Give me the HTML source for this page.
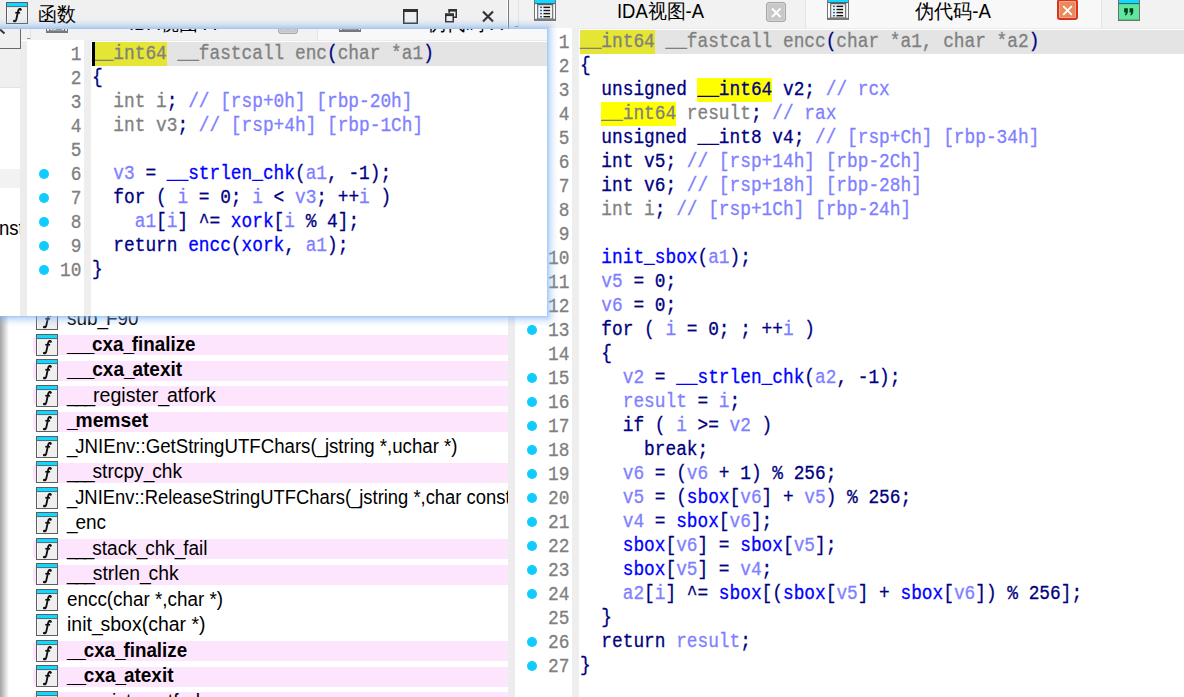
<!DOCTYPE html>
<html><head><meta charset="utf-8"><style>
html,body{margin:0;padding:0;}
body{width:1184px;height:697px;overflow:hidden;position:relative;background:#fff;font-family:"Liberation Sans",sans-serif;}
div{position:absolute;}
.code{font-family:"Liberation Mono",monospace;font-size:19.5px;line-height:24px;white-space:pre;height:24px;transform:scaleX(0.9128);transform-origin:0 0;-webkit-text-stroke:0.3px currentColor;}
.ln{margin-top:1px;font-family:"Liberation Mono",monospace;font-size:19.5px;line-height:24px;text-align:right;color:#808080;height:24px;letter-spacing:-1.02px;-webkit-text-stroke:0.25px currentColor;}
.dot{width:10px;height:10px;border-radius:50%;background:#11ccff;}
.hl{height:24px;}
.pink{left:33px;width:475px;height:20px;background:#fde6fd;border-radius:5px 0 0 5px;}
.ficon{left:36px;width:22px;height:22px;}
svg{display:block}
.fname{left:67px;margin-top:-1px;font-size:19.5px;line-height:22px;white-space:pre;color:#000;transform-origin:0 0;}
.u{letter-spacing:-2.2px}
.tab{font-size:19.5px;line-height:22px;white-space:pre;color:#000;transform-origin:0 0;}
</style></head><body>
<!-- left functions panel -->
<div id="fl" style="left:0;top:0;width:508px;height:697px;overflow:hidden;background:#fff">
<div class="ficon" style="top:308px"><svg width="22" height="22" viewBox="0 0 22 22"><rect x="0.5" y="0.5" width="21" height="21" fill="#efefef" stroke="#5e5e5e"/><rect x="1" y="1" width="20" height="3.4" fill="#12d8ff"/><rect x="1" y="4.3" width="20" height="1" fill="#1e4a55"/><rect x="1" y="5.3" width="20" height="1" fill="#fafafa"/><rect x="1" y="5.3" width="1" height="15.7" fill="#fafafa"/><path d="M14.8 7.6 C14.2 6.4 12.8 6.6 12.3 8.4 L10.3 17.4 C10.0 18.9 9.3 19.6 8.0 19.3" fill="none" stroke="#111" stroke-width="1.9" stroke-linecap="round"/><circle cx="14.3" cy="7.5" r="1.15" fill="#111"/><circle cx="8.3" cy="18.9" r="1.15" fill="#111"/><rect x="9.3" y="9.9" width="4.8" height="1.7" fill="#111"/></svg></div>
<div class="fname" style="top:308px;font-weight:normal;transform:scaleX(0.9700)">sub<span class="u">_</span>F90</div>
<div class="pink" style="top:335px"></div>
<div class="ficon" style="top:334px"><svg width="22" height="22" viewBox="0 0 22 22"><rect x="0.5" y="0.5" width="21" height="21" fill="#efefef" stroke="#5e5e5e"/><rect x="1" y="1" width="20" height="3.4" fill="#12d8ff"/><rect x="1" y="4.3" width="20" height="1" fill="#1e4a55"/><rect x="1" y="5.3" width="20" height="1" fill="#fafafa"/><rect x="1" y="5.3" width="1" height="15.7" fill="#fafafa"/><path d="M14.8 7.6 C14.2 6.4 12.8 6.6 12.3 8.4 L10.3 17.4 C10.0 18.9 9.3 19.6 8.0 19.3" fill="none" stroke="#111" stroke-width="1.9" stroke-linecap="round"/><circle cx="14.3" cy="7.5" r="1.15" fill="#111"/><circle cx="8.3" cy="18.9" r="1.15" fill="#111"/><rect x="9.3" y="9.9" width="4.8" height="1.7" fill="#111"/></svg></div>
<div class="fname" style="top:334px;font-weight:bold;transform:scaleX(0.9644)"><span class="u">___</span>cxa<span class="u">_</span>finalize</div>
<div class="pink" style="top:361px"></div>
<div class="ficon" style="top:359px"><svg width="22" height="22" viewBox="0 0 22 22"><rect x="0.5" y="0.5" width="21" height="21" fill="#efefef" stroke="#5e5e5e"/><rect x="1" y="1" width="20" height="3.4" fill="#12d8ff"/><rect x="1" y="4.3" width="20" height="1" fill="#1e4a55"/><rect x="1" y="5.3" width="20" height="1" fill="#fafafa"/><rect x="1" y="5.3" width="1" height="15.7" fill="#fafafa"/><path d="M14.8 7.6 C14.2 6.4 12.8 6.6 12.3 8.4 L10.3 17.4 C10.0 18.9 9.3 19.6 8.0 19.3" fill="none" stroke="#111" stroke-width="1.9" stroke-linecap="round"/><circle cx="14.3" cy="7.5" r="1.15" fill="#111"/><circle cx="8.3" cy="18.9" r="1.15" fill="#111"/><rect x="9.3" y="9.9" width="4.8" height="1.7" fill="#111"/></svg></div>
<div class="fname" style="top:359px;font-weight:bold;transform:scaleX(0.9746)"><span class="u">___</span>cxa<span class="u">_</span>atexit</div>
<div class="pink" style="top:386px"></div>
<div class="ficon" style="top:385px"><svg width="22" height="22" viewBox="0 0 22 22"><rect x="0.5" y="0.5" width="21" height="21" fill="#efefef" stroke="#5e5e5e"/><rect x="1" y="1" width="20" height="3.4" fill="#12d8ff"/><rect x="1" y="4.3" width="20" height="1" fill="#1e4a55"/><rect x="1" y="5.3" width="20" height="1" fill="#fafafa"/><rect x="1" y="5.3" width="1" height="15.7" fill="#fafafa"/><path d="M14.8 7.6 C14.2 6.4 12.8 6.6 12.3 8.4 L10.3 17.4 C10.0 18.9 9.3 19.6 8.0 19.3" fill="none" stroke="#111" stroke-width="1.9" stroke-linecap="round"/><circle cx="14.3" cy="7.5" r="1.15" fill="#111"/><circle cx="8.3" cy="18.9" r="1.15" fill="#111"/><rect x="9.3" y="9.9" width="4.8" height="1.7" fill="#111"/></svg></div>
<div class="fname" style="top:385px;font-weight:normal;transform:scaleX(1.0033)"><span class="u">___</span>register<span class="u">_</span>atfork</div>
<div class="pink" style="top:412px"></div>
<div class="ficon" style="top:410px"><svg width="22" height="22" viewBox="0 0 22 22"><rect x="0.5" y="0.5" width="21" height="21" fill="#efefef" stroke="#5e5e5e"/><rect x="1" y="1" width="20" height="3.4" fill="#12d8ff"/><rect x="1" y="4.3" width="20" height="1" fill="#1e4a55"/><rect x="1" y="5.3" width="20" height="1" fill="#fafafa"/><rect x="1" y="5.3" width="1" height="15.7" fill="#fafafa"/><path d="M14.8 7.6 C14.2 6.4 12.8 6.6 12.3 8.4 L10.3 17.4 C10.0 18.9 9.3 19.6 8.0 19.3" fill="none" stroke="#111" stroke-width="1.9" stroke-linecap="round"/><circle cx="14.3" cy="7.5" r="1.15" fill="#111"/><circle cx="8.3" cy="18.9" r="1.15" fill="#111"/><rect x="9.3" y="9.9" width="4.8" height="1.7" fill="#111"/></svg></div>
<div class="fname" style="top:410px;font-weight:bold;transform:scaleX(0.9869)"><span class="u">_</span>memset</div>
<div class="ficon" style="top:436px"><svg width="22" height="22" viewBox="0 0 22 22"><rect x="0.5" y="0.5" width="21" height="21" fill="#efefef" stroke="#5e5e5e"/><rect x="1" y="1" width="20" height="3.4" fill="#12d8ff"/><rect x="1" y="4.3" width="20" height="1" fill="#1e4a55"/><rect x="1" y="5.3" width="20" height="1" fill="#fafafa"/><rect x="1" y="5.3" width="1" height="15.7" fill="#fafafa"/><path d="M14.8 7.6 C14.2 6.4 12.8 6.6 12.3 8.4 L10.3 17.4 C10.0 18.9 9.3 19.6 8.0 19.3" fill="none" stroke="#111" stroke-width="1.9" stroke-linecap="round"/><circle cx="14.3" cy="7.5" r="1.15" fill="#111"/><circle cx="8.3" cy="18.9" r="1.15" fill="#111"/><rect x="9.3" y="9.9" width="4.8" height="1.7" fill="#111"/></svg></div>
<div class="fname" style="top:436px;font-weight:normal;transform:scaleX(0.9559)"><span class="u">_</span>JNIEnv::GetStringUTFChars(<span class="u">_</span>jstring *,uchar *)</div>
<div class="pink" style="top:463px"></div>
<div class="ficon" style="top:461px"><svg width="22" height="22" viewBox="0 0 22 22"><rect x="0.5" y="0.5" width="21" height="21" fill="#efefef" stroke="#5e5e5e"/><rect x="1" y="1" width="20" height="3.4" fill="#12d8ff"/><rect x="1" y="4.3" width="20" height="1" fill="#1e4a55"/><rect x="1" y="5.3" width="20" height="1" fill="#fafafa"/><rect x="1" y="5.3" width="1" height="15.7" fill="#fafafa"/><path d="M14.8 7.6 C14.2 6.4 12.8 6.6 12.3 8.4 L10.3 17.4 C10.0 18.9 9.3 19.6 8.0 19.3" fill="none" stroke="#111" stroke-width="1.9" stroke-linecap="round"/><circle cx="14.3" cy="7.5" r="1.15" fill="#111"/><circle cx="8.3" cy="18.9" r="1.15" fill="#111"/><rect x="9.3" y="9.9" width="4.8" height="1.7" fill="#111"/></svg></div>
<div class="fname" style="top:461px;font-weight:normal;transform:scaleX(0.9840)"><span class="u">___</span>strcpy<span class="u">_</span>chk</div>
<div class="ficon" style="top:487px"><svg width="22" height="22" viewBox="0 0 22 22"><rect x="0.5" y="0.5" width="21" height="21" fill="#efefef" stroke="#5e5e5e"/><rect x="1" y="1" width="20" height="3.4" fill="#12d8ff"/><rect x="1" y="4.3" width="20" height="1" fill="#1e4a55"/><rect x="1" y="5.3" width="20" height="1" fill="#fafafa"/><rect x="1" y="5.3" width="1" height="15.7" fill="#fafafa"/><path d="M14.8 7.6 C14.2 6.4 12.8 6.6 12.3 8.4 L10.3 17.4 C10.0 18.9 9.3 19.6 8.0 19.3" fill="none" stroke="#111" stroke-width="1.9" stroke-linecap="round"/><circle cx="14.3" cy="7.5" r="1.15" fill="#111"/><circle cx="8.3" cy="18.9" r="1.15" fill="#111"/><rect x="9.3" y="9.9" width="4.8" height="1.7" fill="#111"/></svg></div>
<div class="fname" style="top:487px;font-weight:normal;transform:scaleX(0.9430)"><span class="u">_</span>JNIEnv::ReleaseStringUTFChars(<span class="u">_</span>jstring *,char const*)</div>
<div class="ficon" style="top:512px"><svg width="22" height="22" viewBox="0 0 22 22"><rect x="0.5" y="0.5" width="21" height="21" fill="#efefef" stroke="#5e5e5e"/><rect x="1" y="1" width="20" height="3.4" fill="#12d8ff"/><rect x="1" y="4.3" width="20" height="1" fill="#1e4a55"/><rect x="1" y="5.3" width="20" height="1" fill="#fafafa"/><rect x="1" y="5.3" width="1" height="15.7" fill="#fafafa"/><path d="M14.8 7.6 C14.2 6.4 12.8 6.6 12.3 8.4 L10.3 17.4 C10.0 18.9 9.3 19.6 8.0 19.3" fill="none" stroke="#111" stroke-width="1.9" stroke-linecap="round"/><circle cx="14.3" cy="7.5" r="1.15" fill="#111"/><circle cx="8.3" cy="18.9" r="1.15" fill="#111"/><rect x="9.3" y="9.9" width="4.8" height="1.7" fill="#111"/></svg></div>
<div class="fname" style="top:512px;font-weight:normal;transform:scaleX(0.9748)"><span class="u">_</span>enc</div>
<div class="pink" style="top:539px"></div>
<div class="ficon" style="top:538px"><svg width="22" height="22" viewBox="0 0 22 22"><rect x="0.5" y="0.5" width="21" height="21" fill="#efefef" stroke="#5e5e5e"/><rect x="1" y="1" width="20" height="3.4" fill="#12d8ff"/><rect x="1" y="4.3" width="20" height="1" fill="#1e4a55"/><rect x="1" y="5.3" width="20" height="1" fill="#fafafa"/><rect x="1" y="5.3" width="1" height="15.7" fill="#fafafa"/><path d="M14.8 7.6 C14.2 6.4 12.8 6.6 12.3 8.4 L10.3 17.4 C10.0 18.9 9.3 19.6 8.0 19.3" fill="none" stroke="#111" stroke-width="1.9" stroke-linecap="round"/><circle cx="14.3" cy="7.5" r="1.15" fill="#111"/><circle cx="8.3" cy="18.9" r="1.15" fill="#111"/><rect x="9.3" y="9.9" width="4.8" height="1.7" fill="#111"/></svg></div>
<div class="fname" style="top:538px;font-weight:normal;transform:scaleX(0.9753)"><span class="u">___</span>stack<span class="u">_</span>chk<span class="u">_</span>fail</div>
<div class="pink" style="top:565px"></div>
<div class="ficon" style="top:563px"><svg width="22" height="22" viewBox="0 0 22 22"><rect x="0.5" y="0.5" width="21" height="21" fill="#efefef" stroke="#5e5e5e"/><rect x="1" y="1" width="20" height="3.4" fill="#12d8ff"/><rect x="1" y="4.3" width="20" height="1" fill="#1e4a55"/><rect x="1" y="5.3" width="20" height="1" fill="#fafafa"/><rect x="1" y="5.3" width="1" height="15.7" fill="#fafafa"/><path d="M14.8 7.6 C14.2 6.4 12.8 6.6 12.3 8.4 L10.3 17.4 C10.0 18.9 9.3 19.6 8.0 19.3" fill="none" stroke="#111" stroke-width="1.9" stroke-linecap="round"/><circle cx="14.3" cy="7.5" r="1.15" fill="#111"/><circle cx="8.3" cy="18.9" r="1.15" fill="#111"/><rect x="9.3" y="9.9" width="4.8" height="1.7" fill="#111"/></svg></div>
<div class="fname" style="top:563px;font-weight:normal;transform:scaleX(0.9916)"><span class="u">___</span>strlen<span class="u">_</span>chk</div>
<div class="ficon" style="top:589px"><svg width="22" height="22" viewBox="0 0 22 22"><rect x="0.5" y="0.5" width="21" height="21" fill="#efefef" stroke="#5e5e5e"/><rect x="1" y="1" width="20" height="3.4" fill="#12d8ff"/><rect x="1" y="4.3" width="20" height="1" fill="#1e4a55"/><rect x="1" y="5.3" width="20" height="1" fill="#fafafa"/><rect x="1" y="5.3" width="1" height="15.7" fill="#fafafa"/><path d="M14.8 7.6 C14.2 6.4 12.8 6.6 12.3 8.4 L10.3 17.4 C10.0 18.9 9.3 19.6 8.0 19.3" fill="none" stroke="#111" stroke-width="1.9" stroke-linecap="round"/><circle cx="14.3" cy="7.5" r="1.15" fill="#111"/><circle cx="8.3" cy="18.9" r="1.15" fill="#111"/><rect x="9.3" y="9.9" width="4.8" height="1.7" fill="#111"/></svg></div>
<div class="fname" style="top:589px;font-weight:normal;transform:scaleX(0.9667)">encc(char *,char *)</div>
<div class="ficon" style="top:614px"><svg width="22" height="22" viewBox="0 0 22 22"><rect x="0.5" y="0.5" width="21" height="21" fill="#efefef" stroke="#5e5e5e"/><rect x="1" y="1" width="20" height="3.4" fill="#12d8ff"/><rect x="1" y="4.3" width="20" height="1" fill="#1e4a55"/><rect x="1" y="5.3" width="20" height="1" fill="#fafafa"/><rect x="1" y="5.3" width="1" height="15.7" fill="#fafafa"/><path d="M14.8 7.6 C14.2 6.4 12.8 6.6 12.3 8.4 L10.3 17.4 C10.0 18.9 9.3 19.6 8.0 19.3" fill="none" stroke="#111" stroke-width="1.9" stroke-linecap="round"/><circle cx="14.3" cy="7.5" r="1.15" fill="#111"/><circle cx="8.3" cy="18.9" r="1.15" fill="#111"/><rect x="9.3" y="9.9" width="4.8" height="1.7" fill="#111"/></svg></div>
<div class="fname" style="top:614px;font-weight:normal;transform:scaleX(0.9984)">init<span class="u">_</span>sbox(char *)</div>
<div class="pink" style="top:641px"></div>
<div class="ficon" style="top:640px"><svg width="22" height="22" viewBox="0 0 22 22"><rect x="0.5" y="0.5" width="21" height="21" fill="#efefef" stroke="#5e5e5e"/><rect x="1" y="1" width="20" height="3.4" fill="#12d8ff"/><rect x="1" y="4.3" width="20" height="1" fill="#1e4a55"/><rect x="1" y="5.3" width="20" height="1" fill="#fafafa"/><rect x="1" y="5.3" width="1" height="15.7" fill="#fafafa"/><path d="M14.8 7.6 C14.2 6.4 12.8 6.6 12.3 8.4 L10.3 17.4 C10.0 18.9 9.3 19.6 8.0 19.3" fill="none" stroke="#111" stroke-width="1.9" stroke-linecap="round"/><circle cx="14.3" cy="7.5" r="1.15" fill="#111"/><circle cx="8.3" cy="18.9" r="1.15" fill="#111"/><rect x="9.3" y="9.9" width="4.8" height="1.7" fill="#111"/></svg></div>
<div class="fname" style="top:640px;font-weight:bold;transform:scaleX(0.9646)"><span class="u">__</span>cxa<span class="u">_</span>finalize</div>
<div class="pink" style="top:667px"></div>
<div class="ficon" style="top:665px"><svg width="22" height="22" viewBox="0 0 22 22"><rect x="0.5" y="0.5" width="21" height="21" fill="#efefef" stroke="#5e5e5e"/><rect x="1" y="1" width="20" height="3.4" fill="#12d8ff"/><rect x="1" y="4.3" width="20" height="1" fill="#1e4a55"/><rect x="1" y="5.3" width="20" height="1" fill="#fafafa"/><rect x="1" y="5.3" width="1" height="15.7" fill="#fafafa"/><path d="M14.8 7.6 C14.2 6.4 12.8 6.6 12.3 8.4 L10.3 17.4 C10.0 18.9 9.3 19.6 8.0 19.3" fill="none" stroke="#111" stroke-width="1.9" stroke-linecap="round"/><circle cx="14.3" cy="7.5" r="1.15" fill="#111"/><circle cx="8.3" cy="18.9" r="1.15" fill="#111"/><rect x="9.3" y="9.9" width="4.8" height="1.7" fill="#111"/></svg></div>
<div class="fname" style="top:665px;font-weight:bold;transform:scaleX(0.9730)"><span class="u">__</span>cxa<span class="u">_</span>atexit</div>
<div class="pink" style="top:692px"></div>
<div class="ficon" style="top:691px"><svg width="22" height="22" viewBox="0 0 22 22"><rect x="0.5" y="0.5" width="21" height="21" fill="#efefef" stroke="#5e5e5e"/><rect x="1" y="1" width="20" height="3.4" fill="#12d8ff"/><rect x="1" y="4.3" width="20" height="1" fill="#1e4a55"/><rect x="1" y="5.3" width="20" height="1" fill="#fafafa"/><rect x="1" y="5.3" width="1" height="15.7" fill="#fafafa"/><path d="M14.8 7.6 C14.2 6.4 12.8 6.6 12.3 8.4 L10.3 17.4 C10.0 18.9 9.3 19.6 8.0 19.3" fill="none" stroke="#111" stroke-width="1.9" stroke-linecap="round"/><circle cx="14.3" cy="7.5" r="1.15" fill="#111"/><circle cx="8.3" cy="18.9" r="1.15" fill="#111"/><rect x="9.3" y="9.9" width="4.8" height="1.7" fill="#111"/></svg></div>
<div class="fname" style="top:691px;font-weight:normal;transform:scaleX(0.9900)"><span class="u">__</span>register<span class="u">_</span>atfork</div>
<div style="left:0;top:316px;width:9px;height:381px;background:linear-gradient(90deg,#a4a4a4,rgba(255,255,255,0))"></div>
</div>
<!-- splitter -->
<div style="left:508px;top:29px;width:7px;height:668px;background:#ececec"></div>
<!-- right panel -->
<div style="left:572px;top:29px;width:7px;height:668px;background:#eeeeee"></div>
<div style="left:579.6px;top:30px;width:605px;height:24px;background:#e4e4e4"></div>
<div id="rcode">
<div class="code" style="left:547.96px;top:31px;color:#808080"> 1</div>
<div class="hl" style="left:580.00px;top:30px;width:74.76px;background:#e5e533"></div>
<div class="code" style="left:580px;top:30px"><span style="color:#808080">__int64</span><span style="color:#808080"> __fastcall encc</span><span style="color:#000080">(</span><span style="color:#808080">char *a1, char *a2</span><span style="color:#000080">)</span></div>
<div class="code" style="left:547.96px;top:55px;color:#808080"> 2</div>
<div class="code" style="left:580px;top:54px"><span style="color:#000080">{</span></div>
<div class="code" style="left:547.96px;top:79px;color:#808080"> 3</div>
<div class="hl" style="left:697.48px;top:78px;width:74.76px;background:#ffff00"></div>
<div class="code" style="left:580px;top:78px"><span style="color:#000080">  unsigned </span><span style="color:#000080">__int64</span><span style="color:#000080"> v2; </span><span style="color:#8080ff">// rcx</span></div>
<div class="code" style="left:547.96px;top:103px;color:#808080"> 4</div>
<div class="hl" style="left:601.36px;top:102px;width:74.76px;background:#ffff00"></div>
<div class="code" style="left:580px;top:102px"><span style="color:#000080">  </span><span style="color:#808080">__int64</span><span style="color:#808080"> result</span><span style="color:#000080">; </span><span style="color:#8080ff">// rax</span></div>
<div class="code" style="left:547.96px;top:127px;color:#808080"> 5</div>
<div class="code" style="left:580px;top:126px"><span style="color:#000080">  unsigned __int8 v4; </span><span style="color:#8080ff">// [rsp+Ch] [rbp-34h]</span></div>
<div class="code" style="left:547.96px;top:151px;color:#808080"> 6</div>
<div class="code" style="left:580px;top:150px"><span style="color:#000080">  int v5; </span><span style="color:#8080ff">// [rsp+14h] [rbp-2Ch]</span></div>
<div class="code" style="left:547.96px;top:175px;color:#808080"> 7</div>
<div class="code" style="left:580px;top:174px"><span style="color:#000080">  int v6; </span><span style="color:#8080ff">// [rsp+18h] [rbp-28h]</span></div>
<div class="code" style="left:547.96px;top:199px;color:#808080"> 8</div>
<div class="code" style="left:580px;top:198px"><span style="color:#808080">  int i</span><span style="color:#000080">; </span><span style="color:#8080ff">// [rsp+1Ch] [rbp-24h]</span></div>
<div class="code" style="left:547.96px;top:223px;color:#808080"> 9</div>
<div class="code" style="left:580px;top:222px"></div>
<div class="code" style="left:547.96px;top:247px;color:#808080">10</div>
<div class="code" style="left:580px;top:246px"><span style="color:#000080">  </span><span style="color:#0000ff">init_sbox</span><span style="color:#000080">(</span><span style="color:#8080ff">a1</span><span style="color:#000080">);</span></div>
<div class="code" style="left:547.96px;top:271px;color:#808080">11</div>
<div class="code" style="left:580px;top:270px"><span style="color:#000080">  </span><span style="color:#8080ff">v5</span><span style="color:#000080"> = 0;</span></div>
<div class="code" style="left:547.96px;top:295px;color:#808080">12</div>
<div class="code" style="left:580px;top:294px"><span style="color:#000080">  </span><span style="color:#8080ff">v6</span><span style="color:#000080"> = 0;</span></div>
<div class="code" style="left:547.96px;top:319px;color:#808080">13</div>
<div class="dot" style="left:527px;top:325px"></div>
<div class="code" style="left:580px;top:318px"><span style="color:#000080">  for ( </span><span style="color:#8080ff">i</span><span style="color:#000080"> = 0; ; ++</span><span style="color:#8080ff">i</span><span style="color:#000080"> )</span></div>
<div class="code" style="left:547.96px;top:343px;color:#808080">14</div>
<div class="code" style="left:580px;top:342px"><span style="color:#000080">  {</span></div>
<div class="code" style="left:547.96px;top:367px;color:#808080">15</div>
<div class="dot" style="left:527px;top:373px"></div>
<div class="code" style="left:580px;top:366px"><span style="color:#000080">    </span><span style="color:#8080ff">v2</span><span style="color:#000080"> = </span><span style="color:#0000ff">__strlen_chk</span><span style="color:#000080">(</span><span style="color:#8080ff">a2</span><span style="color:#000080">, -1);</span></div>
<div class="code" style="left:547.96px;top:391px;color:#808080">16</div>
<div class="dot" style="left:527px;top:397px"></div>
<div class="code" style="left:580px;top:390px"><span style="color:#000080">    </span><span style="color:#8080ff">result</span><span style="color:#000080"> = </span><span style="color:#8080ff">i</span><span style="color:#000080">;</span></div>
<div class="code" style="left:547.96px;top:415px;color:#808080">17</div>
<div class="dot" style="left:527px;top:421px"></div>
<div class="code" style="left:580px;top:414px"><span style="color:#000080">    if ( </span><span style="color:#8080ff">i</span><span style="color:#000080"> &gt;= </span><span style="color:#8080ff">v2</span><span style="color:#000080"> )</span></div>
<div class="code" style="left:547.96px;top:439px;color:#808080">18</div>
<div class="dot" style="left:527px;top:445px"></div>
<div class="code" style="left:580px;top:438px"><span style="color:#000080">      break;</span></div>
<div class="code" style="left:547.96px;top:463px;color:#808080">19</div>
<div class="dot" style="left:527px;top:469px"></div>
<div class="code" style="left:580px;top:462px"><span style="color:#000080">    </span><span style="color:#8080ff">v6</span><span style="color:#000080"> = (</span><span style="color:#8080ff">v6</span><span style="color:#000080"> + 1) % 256;</span></div>
<div class="code" style="left:547.96px;top:487px;color:#808080">20</div>
<div class="dot" style="left:527px;top:493px"></div>
<div class="code" style="left:580px;top:486px"><span style="color:#000080">    </span><span style="color:#8080ff">v5</span><span style="color:#000080"> = (</span><span style="color:#0000ff">sbox</span><span style="color:#000080">[</span><span style="color:#8080ff">v6</span><span style="color:#000080">] + </span><span style="color:#8080ff">v5</span><span style="color:#000080">) % 256;</span></div>
<div class="code" style="left:547.96px;top:511px;color:#808080">21</div>
<div class="dot" style="left:527px;top:517px"></div>
<div class="code" style="left:580px;top:510px"><span style="color:#000080">    </span><span style="color:#8080ff">v4</span><span style="color:#000080"> = </span><span style="color:#0000ff">sbox</span><span style="color:#000080">[</span><span style="color:#8080ff">v6</span><span style="color:#000080">];</span></div>
<div class="code" style="left:547.96px;top:535px;color:#808080">22</div>
<div class="dot" style="left:527px;top:541px"></div>
<div class="code" style="left:580px;top:534px"><span style="color:#000080">    </span><span style="color:#0000ff">sbox</span><span style="color:#000080">[</span><span style="color:#8080ff">v6</span><span style="color:#000080">] = </span><span style="color:#0000ff">sbox</span><span style="color:#000080">[</span><span style="color:#8080ff">v5</span><span style="color:#000080">];</span></div>
<div class="code" style="left:547.96px;top:559px;color:#808080">23</div>
<div class="dot" style="left:527px;top:565px"></div>
<div class="code" style="left:580px;top:558px"><span style="color:#000080">    </span><span style="color:#0000ff">sbox</span><span style="color:#000080">[</span><span style="color:#8080ff">v5</span><span style="color:#000080">] = </span><span style="color:#8080ff">v4</span><span style="color:#000080">;</span></div>
<div class="code" style="left:547.96px;top:583px;color:#808080">24</div>
<div class="dot" style="left:527px;top:589px"></div>
<div class="code" style="left:580px;top:582px"><span style="color:#000080">    </span><span style="color:#8080ff">a2</span><span style="color:#000080">[</span><span style="color:#8080ff">i</span><span style="color:#000080">] ^= </span><span style="color:#0000ff">sbox</span><span style="color:#000080">[(</span><span style="color:#0000ff">sbox</span><span style="color:#000080">[</span><span style="color:#8080ff">v5</span><span style="color:#000080">] + </span><span style="color:#0000ff">sbox</span><span style="color:#000080">[</span><span style="color:#8080ff">v6</span><span style="color:#000080">]) % 256];</span></div>
<div class="code" style="left:547.96px;top:607px;color:#808080">25</div>
<div class="code" style="left:580px;top:606px"><span style="color:#000080">  }</span></div>
<div class="code" style="left:547.96px;top:631px;color:#808080">26</div>
<div class="dot" style="left:527px;top:637px"></div>
<div class="code" style="left:580px;top:630px"><span style="color:#000080">  return </span><span style="color:#8080ff">result</span><span style="color:#000080">;</span></div>
<div class="code" style="left:547.96px;top:655px;color:#808080">27</div>
<div class="dot" style="left:527px;top:661px"></div>
<div class="code" style="left:580px;top:654px"><span style="color:#000080">}</span></div>
</div>
<!-- right tab strip -->
<div style="left:0;top:0;width:1184px;height:30px;overflow:hidden">
<div style="left:509px;top:0px;width:296px;height:28px;background:#f2f2f2"></div>
<div style="left:805px;top:0px;width:296px;height:28px;background:#f8f8f8"></div>
<div style="left:1101px;top:0px;width:200px;height:28px;background:#f2f2f2"></div>
<div style="left:805px;top:0px;width:1px;height:28px;background:#e4e4e4"></div>
<div style="left:1101px;top:0px;width:1px;height:28px;background:#e4e4e4"></div>
<div style="left:518px;top:0px;width:1px;height:28px;background:#e2e2e2"></div>
<div style="left:515px;top:26px;width:3px;height:1px;background:#8a8a8a"></div>
<div style="left:515px;top:28px;width:57px;height:1px;background:#ffffff"></div>
<div style="left:579px;top:28px;width:800px;height:1px;background:#ebebeb"></div>
<div style="left:579px;top:29px;width:800px;height:1px;background:#ffffff"></div>
<div style="left:572px;top:28px;width:7px;height:2px;background:#eeeeee"></div>
<div style="left:534px;top:-1px"><svg width="22" height="22" viewBox="0 0 22 22"><rect x="0.5" y="0.5" width="21" height="21" fill="#fbfbfb" stroke="#747474"/><rect x="1" y="0" width="20" height="4.3" fill="#12d8ff"/><rect x="1" y="4.2" width="20" height="0.9" fill="#2e4c55"/><defs><linearGradient id="lg" x1="0" y1="0" x2="0" y2="1"><stop offset="0" stop-color="#c8c8c8"/><stop offset="0.25" stop-color="#f4f4f4"/><stop offset="1" stop-color="#f0f0f0"/></linearGradient></defs><rect x="3.7" y="5.5" width="15" height="14.5" fill="url(#lg)" stroke="#5a5a5a" stroke-width="1"/><g fill="#1f6fae"><rect x="6" y="7.7" width="2" height="1.4"/><rect x="6" y="10.8" width="2" height="1.4"/><rect x="6" y="13.9" width="2" height="1.4"/><rect x="6" y="17" width="2" height="1.4"/></g><g fill="#161616"><rect x="9.5" y="7.7" width="6.6" height="1.4"/><rect x="9.5" y="10.8" width="6.6" height="1.4"/><rect x="9.5" y="13.9" width="6.6" height="1.4"/><rect x="9.5" y="17" width="6.6" height="1.4"/></g><rect x="1" y="19.8" width="20" height="1.7" fill="#7a7a7a"/></svg></div>
<div class="tab" style="left:616.5px;top:0px;transform:scaleX(0.945)">IDA视图-A</div>
<div style="left:766px;top:2px;width:18px;height:18px;border:1px solid #a6a6a6;border-radius:3px;background:#c8c8c8;box-shadow:inset 0 0 0 1px #d2d2d2"><svg width="18" height="18"><path d="M5 5.5 L13.5 14 M13.5 5.5 L5 14" stroke="#fff" stroke-width="1.9"/></svg></div>
<div style="left:827px;top:-2px"><svg width="22" height="22" viewBox="0 0 22 22"><rect x="0.5" y="0.5" width="21" height="21" fill="#fbfbfb" stroke="#747474"/><rect x="1" y="0" width="20" height="4.3" fill="#12d8ff"/><rect x="1" y="4.2" width="20" height="0.9" fill="#2e4c55"/><defs><linearGradient id="lg" x1="0" y1="0" x2="0" y2="1"><stop offset="0" stop-color="#c8c8c8"/><stop offset="0.25" stop-color="#f4f4f4"/><stop offset="1" stop-color="#f0f0f0"/></linearGradient></defs><rect x="3.7" y="5.5" width="15" height="14.5" fill="url(#lg)" stroke="#5a5a5a" stroke-width="1"/><g fill="#1f6fae"><rect x="6" y="7.7" width="2" height="1.4"/><rect x="6" y="10.8" width="2" height="1.4"/><rect x="6" y="13.9" width="2" height="1.4"/><rect x="6" y="17" width="2" height="1.4"/></g><g fill="#161616"><rect x="9.5" y="7.7" width="6.6" height="1.4"/><rect x="9.5" y="10.8" width="6.6" height="1.4"/><rect x="9.5" y="13.9" width="6.6" height="1.4"/><rect x="9.5" y="17" width="6.6" height="1.4"/></g><rect x="1" y="19.8" width="20" height="1.7" fill="#7a7a7a"/></svg></div>
<div class="tab" style="left:915px;top:0px;transform:scaleX(0.955)">伪代码-A</div>
<div style="left:1057px;top:-1px;width:17px;height:17px;border:2px solid #da3421;border-radius:3px;background:#e98a5c;box-shadow:inset 0 0 0 1px #f0a68a"><svg width="17" height="17"><path d="M4.2 5.2 L12.8 13.8 M12.8 5.2 L4.2 13.8" stroke="#fff" stroke-width="1.9"/></svg></div>
<div style="left:1118px;top:-1px"><svg width="22" height="22" viewBox="0 0 22 22"><rect x="0.5" y="0.5" width="21" height="21" fill="#5ee69e" stroke="#6e6e6e"/><rect x="1" y="0" width="20" height="4.3" fill="#12d8ff"/><rect x="1" y="4.2" width="20" height="0.9" fill="#2e4c55"/><path d="M6.2 9.2 h3.6 v3.8 q0 2.2 -2.2 3.6 l-0.9 -0.7 q1.1 -1.0 1.1 -2.3 h-1.6z M11.6 9.2 h3.6 v3.8 q0 2.2 -2.2 3.6 l-0.9 -0.7 q1.1 -1.0 1.1 -2.3 h-1.6z" fill="#00391a"/><rect x="1" y="20.5" width="20" height="1" fill="#5a8a6a"/></svg></div>
</div>
<!-- popup -->
<div id="pp" style="left:0;top:29px;width:547px;height:287px;overflow:hidden;background:#fff">
 <div style="left:0;top:-29px;width:547px;height:316px">
  <div style="left:21px;top:12px;width:296px;height:28px;background:#f2f2f2"></div>
<div style="left:317px;top:12px;width:296px;height:28px;background:#f8f8f8"></div>
<div style="left:613px;top:12px;width:200px;height:28px;background:#f2f2f2"></div>
<div style="left:317px;top:12px;width:1px;height:28px;background:#e4e4e4"></div>
<div style="left:613px;top:12px;width:1px;height:28px;background:#e4e4e4"></div>
<div style="left:30px;top:12px;width:1px;height:28px;background:#e2e2e2"></div>
<div style="left:27px;top:38px;width:3px;height:1px;background:#8a8a8a"></div>
<div style="left:27px;top:40px;width:57px;height:1px;background:#ffffff"></div>
<div style="left:91px;top:40px;width:800px;height:1px;background:#ebebeb"></div>
<div style="left:91px;top:41px;width:800px;height:1px;background:#ffffff"></div>
<div style="left:84px;top:40px;width:7px;height:2px;background:#eeeeee"></div>
<div style="left:46px;top:11px"><svg width="22" height="22" viewBox="0 0 22 22"><rect x="0.5" y="0.5" width="21" height="21" fill="#fbfbfb" stroke="#747474"/><rect x="1" y="0" width="20" height="4.3" fill="#12d8ff"/><rect x="1" y="4.2" width="20" height="0.9" fill="#2e4c55"/><defs><linearGradient id="lg" x1="0" y1="0" x2="0" y2="1"><stop offset="0" stop-color="#c8c8c8"/><stop offset="0.25" stop-color="#f4f4f4"/><stop offset="1" stop-color="#f0f0f0"/></linearGradient></defs><rect x="3.7" y="5.5" width="15" height="14.5" fill="url(#lg)" stroke="#5a5a5a" stroke-width="1"/><g fill="#1f6fae"><rect x="6" y="7.7" width="2" height="1.4"/><rect x="6" y="10.8" width="2" height="1.4"/><rect x="6" y="13.9" width="2" height="1.4"/><rect x="6" y="17" width="2" height="1.4"/></g><g fill="#161616"><rect x="9.5" y="7.7" width="6.6" height="1.4"/><rect x="9.5" y="10.8" width="6.6" height="1.4"/><rect x="9.5" y="13.9" width="6.6" height="1.4"/><rect x="9.5" y="17" width="6.6" height="1.4"/></g><rect x="1" y="19.8" width="20" height="1.7" fill="#7a7a7a"/></svg></div>
<div class="tab" style="left:128.5px;top:12px;transform:scaleX(0.945)">IDA视图-A</div>
<div style="left:278px;top:14px;width:18px;height:18px;border:1px solid #a6a6a6;border-radius:3px;background:#c8c8c8;box-shadow:inset 0 0 0 1px #d2d2d2"><svg width="18" height="18"><path d="M5 5.5 L13.5 14 M13.5 5.5 L5 14" stroke="#fff" stroke-width="1.9"/></svg></div>
<div style="left:339px;top:10px"><svg width="22" height="22" viewBox="0 0 22 22"><rect x="0.5" y="0.5" width="21" height="21" fill="#fbfbfb" stroke="#747474"/><rect x="1" y="0" width="20" height="4.3" fill="#12d8ff"/><rect x="1" y="4.2" width="20" height="0.9" fill="#2e4c55"/><defs><linearGradient id="lg" x1="0" y1="0" x2="0" y2="1"><stop offset="0" stop-color="#c8c8c8"/><stop offset="0.25" stop-color="#f4f4f4"/><stop offset="1" stop-color="#f0f0f0"/></linearGradient></defs><rect x="3.7" y="5.5" width="15" height="14.5" fill="url(#lg)" stroke="#5a5a5a" stroke-width="1"/><g fill="#1f6fae"><rect x="6" y="7.7" width="2" height="1.4"/><rect x="6" y="10.8" width="2" height="1.4"/><rect x="6" y="13.9" width="2" height="1.4"/><rect x="6" y="17" width="2" height="1.4"/></g><g fill="#161616"><rect x="9.5" y="7.7" width="6.6" height="1.4"/><rect x="9.5" y="10.8" width="6.6" height="1.4"/><rect x="9.5" y="13.9" width="6.6" height="1.4"/><rect x="9.5" y="17" width="6.6" height="1.4"/></g><rect x="1" y="19.8" width="20" height="1.7" fill="#7a7a7a"/></svg></div>
<div class="tab" style="left:427px;top:12px;transform:scaleX(0.955)">伪代码-A</div>
<div style="left:569px;top:11px;width:17px;height:17px;border:2px solid #da3421;border-radius:3px;background:#e98a5c;box-shadow:inset 0 0 0 1px #f0a68a"><svg width="17" height="17"><path d="M4.2 5.2 L12.8 13.8 M12.8 5.2 L4.2 13.8" stroke="#fff" stroke-width="1.9"/></svg></div>
<div style="left:630px;top:11px"><svg width="22" height="22" viewBox="0 0 22 22"><rect x="0.5" y="0.5" width="21" height="21" fill="#5ee69e" stroke="#6e6e6e"/><rect x="1" y="0" width="20" height="4.3" fill="#12d8ff"/><rect x="1" y="4.2" width="20" height="0.9" fill="#2e4c55"/><path d="M6.2 9.2 h3.6 v3.8 q0 2.2 -2.2 3.6 l-0.9 -0.7 q1.1 -1.0 1.1 -2.3 h-1.6z M11.6 9.2 h3.6 v3.8 q0 2.2 -2.2 3.6 l-0.9 -0.7 q1.1 -1.0 1.1 -2.3 h-1.6z" fill="#00391a"/><rect x="1" y="20.5" width="20" height="1" fill="#5a8a6a"/></svg></div>
  <div style="left:20px;top:41px;width:7px;height:275px;background:#ececec"></div>
  <div style="left:84px;top:41px;width:7px;height:275px;background:#eeeeee"></div>
  <div style="left:91.6px;top:42px;width:456px;height:24px;background:#e4e4e4"></div>
  <div style="left:0;top:0;width:20px;height:316px;background:#fff"></div>
  <div style="left:0;top:0;width:20px;height:88px;background:#f0f0f0"></div>
  <div style="left:0;top:87px;width:20px;height:1px;background:#e3e3e3"></div>
  <div style="left:0;top:169px;width:20px;height:19px;background:#f2f2f2"></div>
  <div style="left:0;top:200px;width:20px;height:50px;overflow:hidden"><div style="left:-1px;top:17px;font-size:19.5px;line-height:22px;white-space:pre;transform:scaleX(0.95);transform-origin:0 0">nst</div></div>
  <div style="left:0;top:48px;width:21px;height:1px;background:#6a6a6a"></div>
  <div style="left:20px;top:0;width:1px;height:49px;background:#6a6a6a"></div>
  <svg style="position:absolute;left:0;top:29px" width="8" height="8"><path d="M0 0.5 L4.5 4.5" stroke="#333" stroke-width="2"/></svg>
  <div class="code" style="left:59.96px;top:43px;color:#808080"> 1</div>
<div class="hl" style="left:92.00px;top:42px;width:74.76px;background:#e5e533"></div>
<div class="code" style="left:92px;top:42px"><span style="color:#808080">__int64</span><span style="color:#808080"> __fastcall enc</span><span style="color:#000080">(</span><span style="color:#808080">char *a1</span><span style="color:#000080">)</span></div>
<div class="code" style="left:59.96px;top:67px;color:#808080"> 2</div>
<div class="code" style="left:92px;top:66px"><span style="color:#000080">{</span></div>
<div class="code" style="left:59.96px;top:91px;color:#808080"> 3</div>
<div class="code" style="left:92px;top:90px"><span style="color:#808080">  int i</span><span style="color:#000080">; </span><span style="color:#8080ff">// [rsp+0h] [rbp-20h]</span></div>
<div class="code" style="left:59.96px;top:115px;color:#808080"> 4</div>
<div class="code" style="left:92px;top:114px"><span style="color:#808080">  int v3</span><span style="color:#000080">; </span><span style="color:#8080ff">// [rsp+4h] [rbp-1Ch]</span></div>
<div class="code" style="left:59.96px;top:139px;color:#808080"> 5</div>
<div class="code" style="left:92px;top:138px"></div>
<div class="code" style="left:59.96px;top:163px;color:#808080"> 6</div>
<div class="dot" style="left:39px;top:169px"></div>
<div class="code" style="left:92px;top:162px"><span style="color:#000080">  </span><span style="color:#8080ff">v3</span><span style="color:#000080"> = </span><span style="color:#0000ff">__strlen_chk</span><span style="color:#000080">(</span><span style="color:#8080ff">a1</span><span style="color:#000080">, -1);</span></div>
<div class="code" style="left:59.96px;top:187px;color:#808080"> 7</div>
<div class="dot" style="left:39px;top:193px"></div>
<div class="code" style="left:92px;top:186px"><span style="color:#000080">  for ( </span><span style="color:#8080ff">i</span><span style="color:#000080"> = 0; </span><span style="color:#8080ff">i</span><span style="color:#000080"> &lt; </span><span style="color:#8080ff">v3</span><span style="color:#000080">; ++</span><span style="color:#8080ff">i</span><span style="color:#000080"> )</span></div>
<div class="code" style="left:59.96px;top:211px;color:#808080"> 8</div>
<div class="dot" style="left:39px;top:217px"></div>
<div class="code" style="left:92px;top:210px"><span style="color:#000080">    </span><span style="color:#8080ff">a1</span><span style="color:#000080">[</span><span style="color:#8080ff">i</span><span style="color:#000080">] ^= </span><span style="color:#0000ff">xork</span><span style="color:#000080">[</span><span style="color:#8080ff">i</span><span style="color:#000080"> % 4];</span></div>
<div class="code" style="left:59.96px;top:235px;color:#808080"> 9</div>
<div class="dot" style="left:39px;top:241px"></div>
<div class="code" style="left:92px;top:234px"><span style="color:#000080">  return </span><span style="color:#0000ff">encc</span><span style="color:#000080">(</span><span style="color:#0000ff">xork</span><span style="color:#000080">, </span><span style="color:#8080ff">a1</span><span style="color:#000080">);</span></div>
<div class="code" style="left:59.96px;top:259px;color:#808080">10</div>
<div class="dot" style="left:39px;top:265px"></div>
<div class="code" style="left:92px;top:258px"><span style="color:#000080">}</span></div>
  <div style="left:92px;top:42px;width:3px;height:24px;background:#000"></div>
 </div>
</div>
<!-- title bar -->
<div style="left:0;top:0;width:508px;height:29px;background:#f0f0f0"></div>
<div style="left:507px;top:0;width:1px;height:29px;background:#ffffff"></div>
<div style="left:508px;top:0;width:1px;height:29px;background:#707880"></div>
<div style="left:6px;top:2px"><svg width="22" height="22" viewBox="0 0 22 22"><rect x="0.5" y="0.5" width="21" height="21" fill="#efefef" stroke="#5e5e5e"/><rect x="1" y="1" width="20" height="3.4" fill="#12d8ff"/><rect x="1" y="4.3" width="20" height="1" fill="#1e4a55"/><rect x="1" y="5.3" width="20" height="1" fill="#fafafa"/><rect x="1" y="5.3" width="1" height="15.7" fill="#fafafa"/><path d="M14.8 7.6 C14.2 6.4 12.8 6.6 12.3 8.4 L10.3 17.4 C10.0 18.9 9.3 19.6 8.0 19.3" fill="none" stroke="#111" stroke-width="1.9" stroke-linecap="round"/><circle cx="14.3" cy="7.5" r="1.15" fill="#111"/><circle cx="8.3" cy="18.9" r="1.15" fill="#111"/><rect x="9.3" y="9.9" width="4.8" height="1.7" fill="#111"/></svg></div>
<div style="left:38px;top:2px;font-size:20px;line-height:24px;transform:scaleX(0.95);transform-origin:0 0">函数</div>
<svg style="position:absolute;left:402px;top:8px" width="17" height="17"><rect x="1.75" y="1.75" width="13.5" height="13.5" fill="none" stroke="#303030" stroke-width="1.5"/><rect x="1" y="1" width="15" height="3" fill="#303030"/></svg>
<svg style="position:absolute;left:444px;top:8px" width="15" height="16"><path d="M5.2 5 V1.75 H12.25 V9.25 H10" fill="none" stroke="#303030" stroke-width="1.5"/><rect x="4.5" y="1" width="8.5" height="2.6" fill="#303030"/><rect x="1.75" y="6.25" width="7.5" height="7.5" fill="none" stroke="#303030" stroke-width="1.5"/><rect x="1" y="5.5" width="9" height="2.6" fill="#303030"/></svg>
<svg style="position:absolute;left:481px;top:10px" width="14" height="13"><path d="M2 1.5 L12 11.5 M12 1.5 L2 11.5" stroke="#333" stroke-width="2.2"/></svg>
<!-- glow -->
<div style="left:0;top:18px;width:547px;height:11px;background:linear-gradient(0deg,rgba(125,178,242,0.72) 0px,rgba(125,178,242,0.45) 2px,rgba(125,178,242,0.22) 5px,rgba(125,178,242,0.08) 8px,rgba(125,178,242,0) 11px)"></div>
<div style="left:547px;top:18px;width:11px;height:11px;background:radial-gradient(circle 11px at 0 100%,rgba(125,178,242,0.72) 0px,rgba(125,178,242,0.45) 2px,rgba(125,178,242,0.22) 5px,rgba(125,178,242,0.08) 8px,rgba(125,178,242,0) 11px)"></div>
<div style="left:547px;top:29px;width:11px;height:287px;background:linear-gradient(90deg,rgba(125,178,242,0.72) 0px,rgba(125,178,242,0.45) 2px,rgba(125,178,242,0.22) 5px,rgba(125,178,242,0.08) 8px,rgba(125,178,242,0) 11px)"></div>
<div style="left:0;top:316px;width:547px;height:11px;background:linear-gradient(180deg,rgba(125,178,242,0.72) 0px,rgba(125,178,242,0.45) 2px,rgba(125,178,242,0.22) 5px,rgba(125,178,242,0.08) 8px,rgba(125,178,242,0) 11px)"></div>
<div style="left:547px;top:316px;width:11px;height:11px;background:radial-gradient(circle 11px at 0 0,rgba(125,178,242,0.72) 0px,rgba(125,178,242,0.45) 2px,rgba(125,178,242,0.22) 5px,rgba(125,178,242,0.08) 8px,rgba(125,178,242,0) 11px)"></div>
</body></html>
